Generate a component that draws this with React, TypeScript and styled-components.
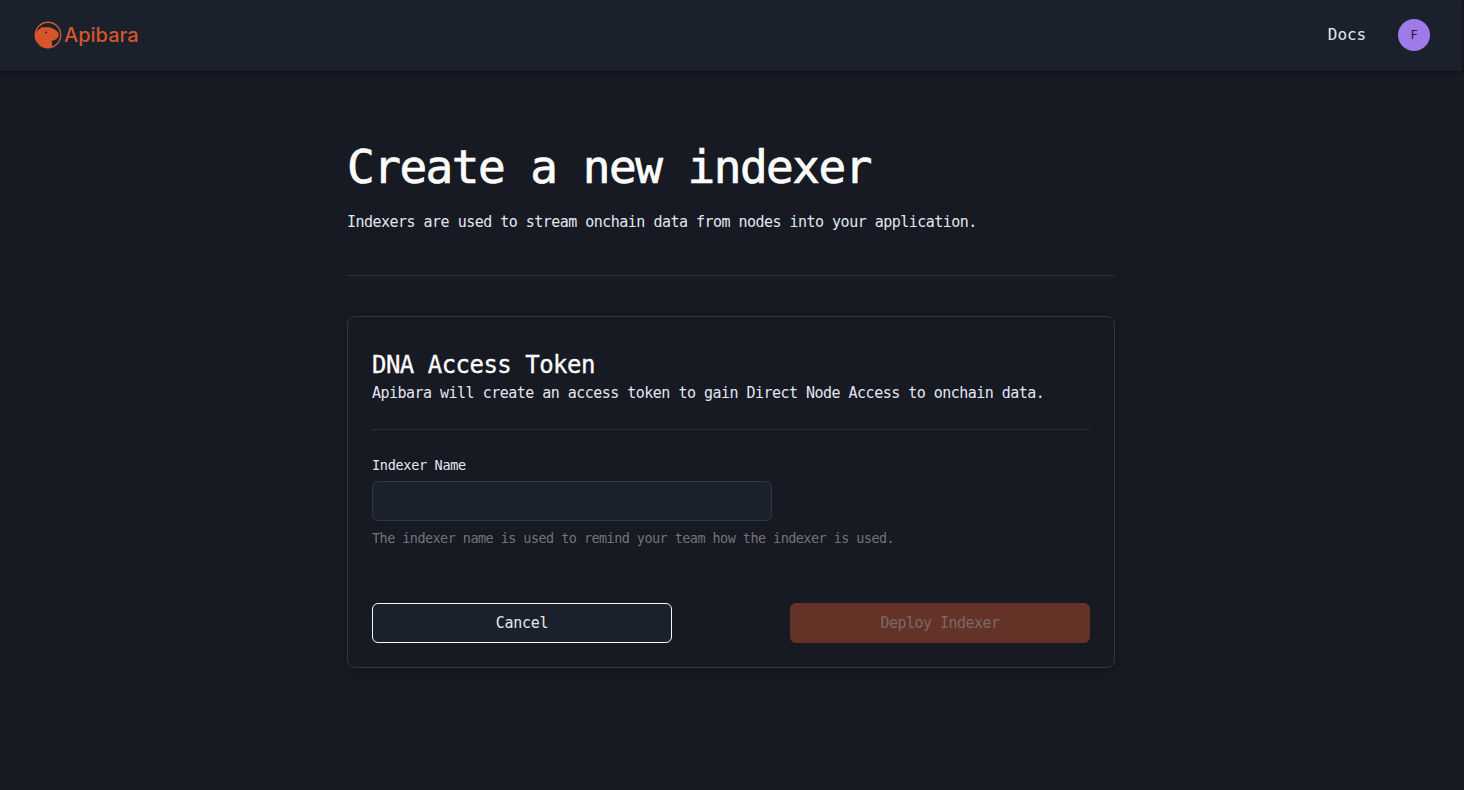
import React from 'react';
import styled, { createGlobalStyle } from 'styled-components';

const GlobalStyle = createGlobalStyle`
  html, body {
    margin: 0;
    padding: 0;
    background: #171923;
  }
  body {
    font-family: 'DejaVu Sans Mono', 'Liberation Mono', monospace;
    color: #e2e8f0;
  }
  * {
    box-sizing: border-box;
  }
`;

function BrandMark() {
  return (
    <svg width="28" height="28" viewBox="0 0 28 28" fill="none">
      <circle cx="14" cy="14" r="12.7" stroke="#d6552b" strokeWidth="1.4" />
      <path
        d="M1 15.5 C1.4 11.5 3.6 8.6 6.6 7.6 L7.4 6 L9.6 6.6 C12.6 5.8 16.6 6 19 7.6 C21 8.6 23.6 10.6 24.6 12.4 L24.6 15.4 C23 18 20.6 19.4 17.6 19.8 L18.4 26 C14 27.6 9 27 5.6 23.6 C3 21.6 1.4 18.6 1 15.5 Z"
        fill="#d6552b"
      />
      <circle cx="12" cy="11.4" r="0.9" fill="#1a202c" />
    </svg>
  );
}

function App() {
  return (
    <>
      <GlobalStyle />
      <Page>
        <Header>
          <Brand>
            <BrandMark />
            <BrandName>Apibara</BrandName>
          </Brand>
          <HeaderRight>
            <DocsLink>Docs</DocsLink>
            <Avatar>F</Avatar>
          </HeaderRight>
        </Header>
        <Main>
          <Title>Create a new indexer</Title>
          <Subtitle>
            Indexers are used to stream onchain data from nodes into your application.
          </Subtitle>
          <Divider />
          <Card>
            <CardTitle>DNA Access Token</CardTitle>
            <CardText>
              Apibara will create an access token to gain Direct Node Access to onchain data.
            </CardText>
            <CardDivider />
            <Label htmlFor="indexer-name">Indexer Name</Label>
            <Input id="indexer-name" />
            <Help>The indexer name is used to remind your team how the indexer is used.</Help>
            <Actions>
              <CancelButton>Cancel</CancelButton>
              <DeployButton disabled>Deploy Indexer</DeployButton>
            </Actions>
          </Card>
        </Main>
      </Page>
    </>
  );
}

const Page = styled.div`
  width: 1462px;
  min-height: 790px;
`;

const Header = styled.header`
  height: 71px;
  padding: 0 32px 1px 34px;
  display: flex;
  align-items: center;
  justify-content: space-between;
  background: #1a202c;
  box-shadow: 0 1px 3px rgba(0, 0, 0, 0.4);
`;

const Brand = styled.div`
  display: flex;
  align-items: center;
  gap: 2px;
`;

const BrandName = styled.span`
  font-family: 'Inter', sans-serif;
  font-size: 20px;
  font-weight: 500;
  color: #d6552b;
`;

const HeaderRight = styled.div`
  display: flex;
  align-items: center;
  gap: 32px;
`;

const DocsLink = styled.a`
  margin-bottom: 2px;
  font-size: 16px;
  letter-spacing: -0.1px;
  color: #e2e8f0;
`;

const Avatar = styled.div`
  width: 32px;
  height: 32px;
  border-radius: 50%;
  display: flex;
  align-items: center;
  justify-content: center;
  background: #9f7aea;
  color: #1a202c;
  font-size: 12px;
`;

const Main = styled.main`
  width: 768px;
  margin: 0 auto;
  padding-top: 66px;
`;

const Title = styled.h1`
  margin: 0;
  font-size: 46px;
  line-height: 60px;
  font-weight: 400;
  letter-spacing: -1.5px;
  -webkit-text-stroke: 0.7px #fff;
  color: #fff;
`;

const Subtitle = styled.p`
  margin: 13px 0 0;
  font-size: 15px;
  line-height: 24px;
  letter-spacing: -0.52px;
  color: #e2e8f0;
`;

const Divider = styled.hr`
  margin: 41px 0 40px;
  border: 0;
  border-top: 1px solid #2d3039;
`;

const Card = styled.section`
  height: 352px;
  padding: 32px 24px 24px;
  border: 1px solid #2d3748;
  border-radius: 8px;
  background: #171923;
  box-shadow: 0 4px 6px rgba(0, 0, 0, 0.15);
`;

const CardTitle = styled.h2`
  margin: 0;
  font-size: 24px;
  line-height: 32px;
  font-weight: 400;
  letter-spacing: -0.52px;
  -webkit-text-stroke: 0.3px #fff;
  color: #fff;
`;

const CardText = styled.p`
  margin: 0;
  font-size: 15px;
  line-height: 24px;
  letter-spacing: -0.52px;
  color: #e2e8f0;
`;

const CardDivider = styled.hr`
  margin: 24px 0 26px;
  border: 0;
  border-top: 1px solid #2d3039;
`;

const Label = styled.label`
  display: block;
  font-size: 13.5px;
  line-height: 18px;
  letter-spacing: -0.3px;
  color: #e2e8f0;
`;

const Input = styled.input`
  display: block;
  width: 400px;
  height: 40px;
  margin-top: 7px;
  border: 1px solid #2d3748;
  border-radius: 6px;
  background: #1a202c;
`;

const Help = styled.p`
  margin: 8px 0 0;
  font-size: 13.5px;
  line-height: 18px;
  letter-spacing: -0.56px;
  color: #72747a;
`;

const Actions = styled.div`
  display: flex;
  justify-content: space-between;
  margin-top: 56px;
`;

const CancelButton = styled.button`
  width: 300px;
  height: 40px;
  border: 1px solid #f7fafc;
  border-radius: 6px;
  background: #1a202c;
  color: #e2e8f0;
  font: inherit;
  font-size: 15px;
  letter-spacing: -0.3px;
`;

const DeployButton = styled.button`
  width: 300px;
  height: 40px;
  border: 0;
  border-radius: 6px;
  background: #653227;
  color: #7a6a67;
  font: inherit;
  font-size: 15px;
  letter-spacing: -0.52px;
`;

export default App;
